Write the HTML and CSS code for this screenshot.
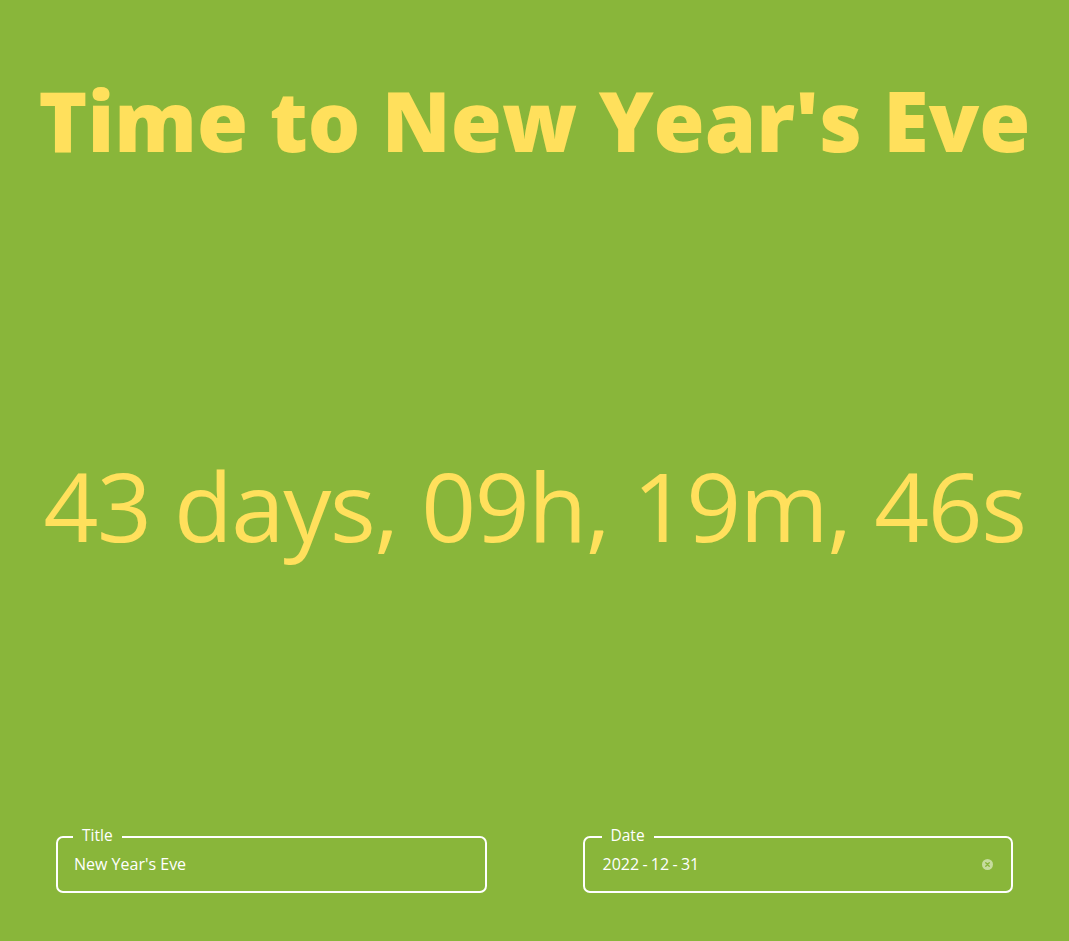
FILE: index.html
```html
<!DOCTYPE html>
<html lang="en">
<head>
<meta charset="utf-8">
<title>Countdown</title>
<link rel="stylesheet" href="styles.css">
</head>
<body>
<div class="page">
  <h1 class="title">Time to New Year's Eve</h1>
  <main class="main">
    <div class="countdown">43 days, 09h, 19m, 46s</div>
  </main>
  <form class="form">
    <fieldset class="field field-title">
      <legend class="legend">Title</legend>
      <div class="row">
        <span class="value">New Year's Eve</span>
      </div>
    </fieldset>
    <fieldset class="field field-date">
      <legend class="legend">Date</legend>
      <div class="row">
        <span class="value date"><span class="seg">2022</span><span class="sep">-</span><span class="seg">12</span><span class="sep">-</span><span class="seg">31</span></span>
        <span class="clear"><svg width="11" height="11" viewBox="0 0 12 12"><circle cx="6" cy="6" r="6" fill="#c6dc9e"/><path d="M4.1 4.1L7.9 7.9M7.9 4.1L4.1 7.9" stroke="#89b63a" stroke-width="1.5" stroke-linecap="round"/></svg></span>
      </div>
    </fieldset>
  </form>
</div>
</body>
</html>
```
FILE: styles.css
```css
* { box-sizing: border-box; }
html, body { margin: 0; padding: 0; }
body {
  background: #89b63a;
  font-family: "Open Sans", "Noto Sans", sans-serif;
  color: #ffe05c;
}
.page {
  min-height: 941px;
  display: flex;
  flex-direction: column;
}
.title {
  margin: 0;
  padding-top: 64px;
  text-align: center;
  font-weight: 800;
  font-size: 82.7px;
  line-height: 112px;
  color: #ffe05c;
}
.main {
  flex: 1;
  display: flex;
  align-items: flex-start;
  justify-content: center;
  padding-top: 263px;
}
.countdown {
  font-size: 96px;
  font-weight: 400;
  line-height: 131px;
  letter-spacing: -1.4px;
}
.form {
  display: grid;
  grid-template-columns: 1fr 1fr;
  column-gap: 96px;
  padding: 0 56px 48px 56px;
}
.field {
  margin: 0;
  min-width: 0;
  border: 2px solid #ffffff;
  border-radius: 7px;
  padding: 5px 18px 15px 16px;
  color: #ffffff;
}
.field-date {
  padding-left: 17px;
}
.legend {
  font-size: 15.5px;
  line-height: 16px;
  padding: 0 9px 4px 9px;
  margin-left: -1px;
}
.field-date .legend {
  margin-left: 0;
}
.row {
  display: flex;
  align-items: center;
  justify-content: space-between;
  height: 24px;
}
.value {
  font-size: 16px;
  line-height: 24px;
}
.date {
  display: flex;
}
.seg {
  padding: 0 1px;
}
.sep {
  padding: 0 2.3px;
}
.clear {
  display: flex;
  width: 11px;
  height: 11px;
}
```
